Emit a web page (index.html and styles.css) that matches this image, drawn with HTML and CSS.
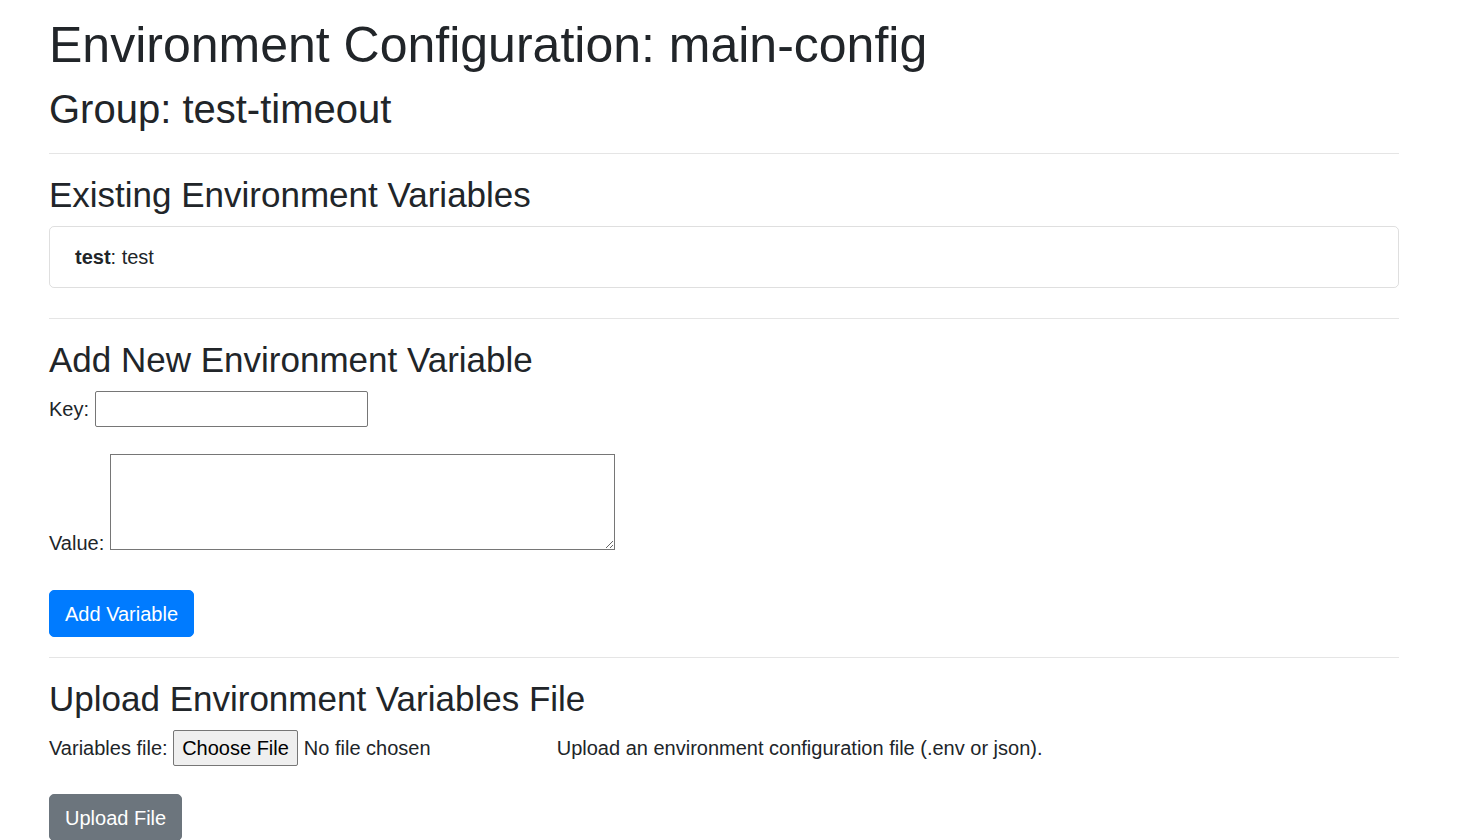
FILE: index.html
```html
<!DOCTYPE html>
<html lang="en">
<head>
<meta charset="utf-8">
<title>Environment Configuration: main-config</title>
<link rel="stylesheet" href="styles.css">
</head>
<body>
<div class="container">
  <h1 class="title">Environment Configuration: main-config</h1>
  <h2 class="subtitle">Group: test-timeout</h2>
  <hr class="divider">

  <h3 class="section-title">Existing Environment Variables</h3>
  <ul class="list-group">
    <li class="list-group-item"><strong>test</strong>: test</li>
  </ul>
  <hr class="divider">

  <h3 class="section-title">Add New Environment Variable</h3>
  <form class="var-form" onsubmit="return false;">
    <div class="field field-key">
      <label for="key">Key:</label> <input type="text" id="key" class="text-input">
    </div>
    <div class="field field-value">
      <label for="value">Value:</label> <textarea id="value" class="text-area" rows="3"></textarea>
    </div>
    <button type="submit" class="btn btn-primary">Add Variable</button>
  </form>
  <hr class="divider">

  <h3 class="section-title">Upload Environment Variables File</h3>
  <form class="upload-form" onsubmit="return false;">
    <div class="field field-file">
      <label for="file">Variables file:</label> <input type="file" id="file" class="file-input"> <span class="help-text">Upload an environment configuration file (.env or json).</span>
    </div>
    <button type="submit" class="btn btn-secondary">Upload File</button>
  </form>
</div>
</body>
</html>
```

FILE: styles.css
```css
* {
  box-sizing: border-box;
}

html {
  font-size: 20px;
}

body {
  margin: 0;
  font-family: "Liberation Sans", Arial, sans-serif;
  font-size: 20px;
  line-height: 1.5;
  color: #212529;
  background: #fff;
}

.container {
  width: 1350px;
  margin-left: 49px;
  padding-top: 15px;
}

.title,
.subtitle,
.section-title {
  font-weight: 500;
  line-height: 1.2;
  margin: 0;
}

.title {
  font-size: 50px;
  margin-bottom: 10px;
}

.subtitle {
  font-size: 40px;
}

.section-title {
  font-size: 35px;
  margin-bottom: 10px;
}

.divider {
  margin: 20px 0;
  border: 0;
  border-top: 1px solid rgba(0, 0, 0, 0.1);
  height: 0;
}

.list-group {
  list-style: none;
  margin: 0 0 30px;
  padding: 0;
}

.list-group-item {
  border: 1px solid rgba(0, 0, 0, 0.125);
  border-radius: 5px;
  padding: 15px 25px;
}

.list-group-item strong {
  font-weight: 700;
}

.var-form,
.upload-form {
  margin: 0;
}

.field label {
  display: inline;
}

.field-key {
  margin-bottom: 27px;
}

.field-value {
  margin-bottom: 32px;
}

.field-file {
  margin-bottom: 28px;
}

.text-input {
  font: inherit;
  line-height: 30px;
  width: 273px;
  height: 36px;
  padding: 1px 2px;
  border: 1px solid #767676;
  border-radius: 2px;
  margin: 0;
  vertical-align: baseline;
  color: #212529;
}

.text-area {
  font: inherit;
  line-height: 30px;
  width: 505px;
  height: 96px;
  padding: 2px;
  border: 1px solid #767676;
  border-radius: 0;
  margin: 0;
  vertical-align: baseline;
  resize: both;
}

.file-input {
  font: inherit;
  line-height: 30px;
  width: 378px;
  margin: 0;
  color: #212529;
}

.file-input::file-selector-button {
  font: inherit;
  height: 36px;
  padding: 1px 8px;
  margin-right: 6px;
  border: 1px solid #767676;
  border-radius: 2px;
  background: #efefef;
  color: #000;
}

.btn {
  display: inline-block;
  font: inherit;
  line-height: 30px;
  padding: 7.5px 15px;
  border: 1px solid transparent;
  border-radius: 5px;
  color: #fff;
  cursor: pointer;
  margin: 0;
}

.btn-primary {
  background-color: #007bff;
  border-color: #007bff;
}

.btn-secondary {
  background-color: #6c757d;
  border-color: #6c757d;
}
```
